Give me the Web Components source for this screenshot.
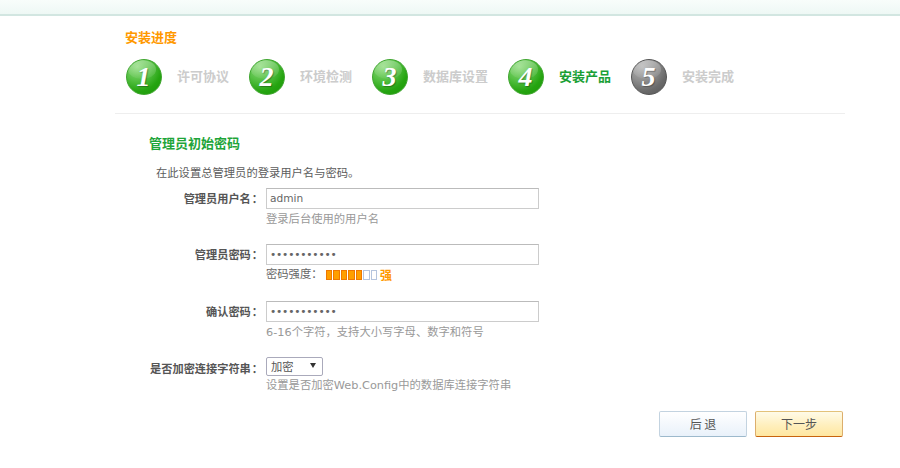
<!DOCTYPE html>
<html lang="zh-CN">
<head>
<meta charset="utf-8">
<title>安装进度</title>
<style>
  html, body { margin: 0; padding: 0; background: #fff; }
  body { font: 11.3px "DejaVu Sans", "Noto Sans CJK TC", sans-serif; color: #555; }
</style>
</head>
<body>
<install-page>
  <install-steps slot="steps"></install-steps>
  <form-field label="管理员用户名" slot="fields" hint="登录后台使用的用户名" style="height:56px">
    <text-box value="admin"></text-box>
  </form-field>
  <form-field label="管理员密码" slot="fields">
    <text-box value="•••••••••••" dots></text-box>
    <strength-meter slot="hint" level="5" total="7" text="强"></strength-meter>
  </form-field>
  <form-field label="确认密码" slot="fields" hint="6-16个字符，支持大小写字母、数字和符号">
    <text-box value="•••••••••••" dots></text-box>
  </form-field>
  <form-field label="是否加密连接字符串" slot="fields" hint="设置是否加密Web.Config中的数据库连接字符串" compact>
    <select-box value="加密"></select-box>
  </form-field>
  <gloss-button slot="actions">后 退</gloss-button>
  <gloss-button slot="actions" primary>下一步</gloss-button>
</install-page>

<script>
const cjk = `"Noto Sans CJK SC", "DejaVu Sans", sans-serif`
const mixed = `"DejaVu Sans", "Noto Sans CJK TC", sans-serif`

const pageTemplate = document.createElement('template')
pageTemplate.innerHTML = `
  <style>
    :host { display: block; }
    .top {
      height: 14px;
      background: linear-gradient(#f8fdfb, #eef8f5);
      border-bottom: 2px solid #d2e6e1;
    }
    .wrap { width: 730px; margin-left: 115px; }
    .progress {
      height: 97px;
      border-bottom: 1px solid #eee;
      padding-left: 10px;
    }
    .progress h2 {
      margin: 0;
      padding-top: 12px;
      height: 31px;
      font: bold 13px/17px ${cjk};
      color: #f90;
    }
    .body { padding-left: 34px; }
    h3 {
      margin: 0;
      padding-top: 20px;
      font: bold 13px/18px ${cjk};
      color: #1fa53a;
    }
    p { margin: 0; padding: 13px 0 0 7px; font: 11.3px/18px ${mixed}; color: #5c5c5c; height: 23px; }
    .actions { display: flex; justify-content: flex-end; gap: 8px; padding: 7px 2px 0 0; }
  </style>
  <div class="top"></div>
  <div class="wrap">
    <section class="progress">
      <h2>安装进度</h2>
      <slot name="steps"></slot>
    </section>
    <section class="body">
      <h3>管理员初始密码</h3>
      <p>在此设置总管理员的登录用户名与密码。</p>
      <slot name="fields"></slot>
    </section>
    <div class="actions"><slot name="actions"></slot></div>
  </div>
`
class InstallPage extends HTMLElement {
  constructor() {
    super()
    this.attachShadow({ mode: 'open' }).append(pageTemplate.content.cloneNode(true))
  }
}

const STEPS = [
  ['1', '许可协议', 'done'],
  ['2', '环境检测', 'done'],
  ['3', '数据库设置', 'done'],
  ['4', '安装产品', 'current'],
  ['5', '安装完成', 'todo'],
]

class InstallSteps extends HTMLElement {
  constructor() {
    super()
    const items = STEPS.map(([n, name, state]) => `
      <li class="${state}"><span class="ball"><i>${n}</i></span><b>${name}</b></li>
    `).join('')
    this.attachShadow({ mode: 'open' }).innerHTML = `
      <style>
        :host { display: block; margin-left: 1px; }
        ul { display: flex; gap: 20px; margin: 0; padding: 0; list-style: none; }
        li { display: flex; align-items: center; gap: 15px; height: 36px; }
        b { font: bold 13px/18px ${cjk}; color: #ccc; margin-bottom: 2px; }
        .current b { color: #1a9f35; }
        .ball {
          position: relative;
          display: flex; align-items: center; justify-content: center;
          width: 36px; height: 36px;
          box-sizing: border-box;
          border-radius: 50%;
          border: 1px solid #3ea52e;
          background: radial-gradient(circle at 30% 20%, #8edb7c 0, #55c043 38%, #25a410 68%, #1a9706 100%);
          overflow: hidden;
        }
        .ball::before {
          content: "";
          position: absolute;
          left: 1px; top: 0;
          width: 28px; height: 19px;
          border-radius: 50%;
          background: linear-gradient(rgba(255,255,255,.3), rgba(255,255,255,.05));
        }
        .todo .ball {
          border-color: #555;
          background: radial-gradient(circle at 30% 20%, #b4b4b4 0, #8f8f8f 38%, #6a6a6a 68%, #565656 100%);
        }
        i {
          position: relative;
          font: italic bold 28px/32px "Liberation Serif", serif;
          color: #fff;
          margin-left: -1px;
          text-shadow: 1px 1px 1px rgba(0,0,0,.3);
        }
      </style>
      <ul>${items}</ul>
    `
  }
}

const fieldTemplate = document.createElement('template')
fieldTemplate.innerHTML = `
  <style>
    :host { display: block; height: 57px; }
    :host([compact]) { height: 46px; }
    .row { display: grid; grid-template-columns: 114px 1fr; column-gap: 3px; }
    label {
      font: bold 11.2px/21px ${cjk};
      color: #555;
      text-align: right;
      white-space: nowrap;
    }
    /* the TC font centres the full-width colon, like the reference */
    label span { font-family: "Noto Sans CJK TC", sans-serif; margin-left: 1px; }
    .hint { grid-column: 2; font: 11.3px/18px ${mixed}; color: #999; height: 18px; margin-top: 2px; }
    :host([compact]) .hint { margin-top: -2px; }
  </style>
  <div class="row">
    <label></label>
    <div><slot></slot></div>
    <div class="hint"><slot name="hint"></slot></div>
  </div>
`
class FormField extends HTMLElement {
  constructor() {
    super()
    const shadow = this.attachShadow({ mode: 'open' })
    shadow.append(fieldTemplate.content.cloneNode(true))
    shadow.querySelector('label').innerHTML = `${this.getAttribute('label')}<span>：</span>`
    const hint = this.getAttribute('hint')
    if (hint) shadow.querySelector('slot[name=hint]').textContent = hint
  }
}

class TextBox extends HTMLElement {
  constructor() {
    super()
    const dots = this.hasAttribute('dots')
    this.attachShadow({ mode: 'open' }).innerHTML = `
      <style>
        :host { display: block; }
        div {
          width: 273px; height: 21px;
          box-sizing: border-box;
          border: 1px solid #ccc;
          border-top-color: #bbb;
          padding-left: 3px;
          font: 10.6px/19px "DejaVu Sans", sans-serif;
          color: #666;
          letter-spacing: ${dots ? '-0.2px' : '0'};
          background: #fff;
        }
      </style>
      <div>${this.getAttribute('value')}</div>
    `
  }
}

class SelectBox extends HTMLElement {
  constructor() {
    super()
    this.attachShadow({ mode: 'open' }).innerHTML = `
      <style>
        :host { display: block; position: relative; width: 57px; height: 19px; margin-top: -1px; }
        select {
          appearance: none;
          display: block;
          width: 57px; height: 19px;
          box-sizing: border-box;
          padding: 0 0 0 4px;
          border: 1px solid #aab;
          border-radius: 2px;
          background: #fff;
          font: 11.3px/17px ${cjk};
          color: #555;
        }
        span {
          position: absolute;
          right: 7px; top: 6px;
          border: 3px solid transparent;
          border-top: 5px solid #333;
          border-bottom: 0;
        }
      </style>
      <select><option>${this.getAttribute('value')}</option></select>
      <span></span>
    `
  }
}

class StrengthMeter extends HTMLElement {
  constructor() {
    super()
    const level = +this.getAttribute('level')
    const total = +this.getAttribute('total')
    let bars = ''
    for (let i = 0; i < total; i++) bars += `<u class="${i < level ? 'on' : ''}"></u>`
    this.attachShadow({ mode: 'open' }).innerHTML = `
      <style>
        :host { display: flex; align-items: center; margin-top: -1px; }
        .bars { display: flex; gap: 1px; margin: 0 3px; }
        u {
          display: block;
          width: 6.5px; height: 10px;
          box-sizing: border-box;
          border: 1px solid #b5c5de;
          background: #fff;
        }
        u.on { border-color: #f07800; background: #ff9f00; }
        b { font: bold 12px/18px ${cjk}; color: #f90; }
      </style>
      <span style="color:#666">密码强度：</span>
      <div class="bars">${bars}</div>
      <b>${this.getAttribute('text')}</b>
    `
  }
}

const buttonStyle = `
  :host { display: block; }
  button {
    display: block;
    width: 88px; height: 26px;
    padding: 0;
    box-sizing: border-box;
    border-radius: 2px;
    border: 1px solid #c3d3e0;
    border-bottom-color: #9db9cc;
    background: linear-gradient(#fff, #e9f1fa);
    font: 12px/24px ${cjk};
    color: #555;
  }
  :host([primary]) button {
    border-color: #e3c27a;
    border-bottom-color: #c8640f;
    border-left-color: #dcae6c;
    border-right-color: #dcae6c;
    background: linear-gradient(#fffbe8, #ffefbd 55%, #ffe7a0);
  }
`
class GlossButton extends HTMLElement {
  constructor() {
    super()
    this.attachShadow({ mode: 'open' }).innerHTML = `
      <style>${buttonStyle}</style>
      <button type="button"><slot></slot></button>
    `
  }
}

customElements.define('install-page', InstallPage)
customElements.define('install-steps', InstallSteps)
customElements.define('form-field', FormField)
customElements.define('text-box', TextBox)
customElements.define('select-box', SelectBox)
customElements.define('strength-meter', StrengthMeter)
customElements.define('gloss-button', GlossButton)
</script>
</body>
</html>
